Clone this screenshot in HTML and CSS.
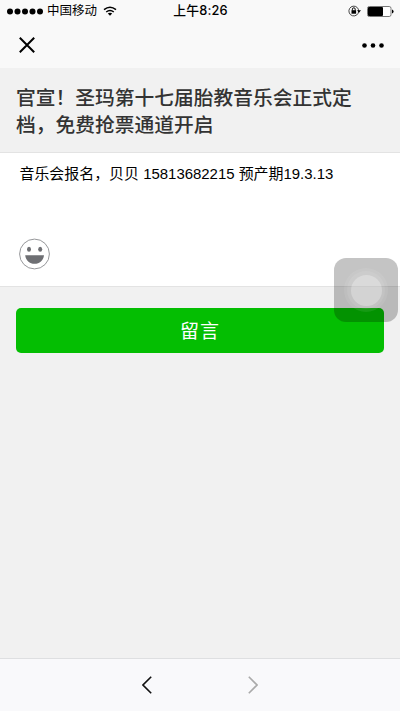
FILE: index.html
```html
<!DOCTYPE html>
<html lang="zh-CN">
<head>
<meta charset="utf-8">
<title>留言</title>
<link rel="stylesheet" href="styles.css">
</head>
<body>
<div class="screen">
  <header class="top">
    <div class="status">
      <div class="carrier">
        <svg class="signal" viewBox="0 0 36 7"><circle cx="3" cy="3.5" r="3"/><circle cx="10.5" cy="3.5" r="3"/><circle cx="18" cy="3.5" r="3"/><circle cx="25.5" cy="3.5" r="3"/><circle cx="33" cy="3.5" r="3"/></svg>
        <span>中国移动</span>
        <svg class="wifi" viewBox="0 0 14 10"><path d="M1 3.6Q7-1.3 13 3.6M3.2 6Q7 2.9 10.8 6" fill="none" stroke="#000" stroke-width="1.5"/><path d="M4.8 7.6Q7 6 9.2 7.6L7 9.7z"/></svg>
      </div>
      <span class="time">上午8:26</span>
      <div class="indicators">
        <svg class="lock" viewBox="0 0 13 12"><path d="M10.7 6A4.9 4.9 0 1 1 9.2 2.5Q10.7 4 10.7 6" fill="none" stroke="#333" stroke-width=".9"/><path d="M9 5.2h4l-2 2.5z"/><rect x="3.5" y="5.2" width="4.6" height="3.5"/><path d="M4.4 5.4V4.2a1.4 1.4 0 0 1 2.8 0v1.2" fill="none" stroke="#000"/></svg>
        <svg class="battery" viewBox="0 0 27 11"><rect x=".5" y=".5" width="23.5" height="10" rx="1.8" fill="#fff" stroke="#777"/><rect x="1" y="1" width="15" height="9" rx="1"/><path d="M25 3.5q1.6.3 1.6 2t-1.6 2z"/></svg>
      </div>
    </div>
    <nav class="navbar">
      <svg class="close" viewBox="0 0 16 16"><path d="M.8.8l14.4 14.4M15.2.8L.8 15.2"/></svg>
      <svg class="more" viewBox="0 0 22 5"><circle cx="2.5" cy="2.5" r="2.3"/><circle cx="11" cy="2.5" r="2.3"/><circle cx="19.5" cy="2.5" r="2.3"/></svg>
    </nav>
  </header>
  <main class="content">
    <h1 class="title">官宣！圣玛第十七届胎教音乐会正式定档，免费抢票通道开启</h1>
    <section class="comment">
      <p class="text">音乐会报名，贝贝 15813682215 预产期19.3.13</p>
      <svg class="emoji" viewBox="0 0 32 32"><circle cx="16.5" cy="16" r="14.9" fill="#fff" stroke="#96979a" stroke-width="1"/><ellipse cx="11" cy="11.2" rx="2" ry="2.5"/><ellipse cx="22.2" cy="11.2" rx="2" ry="2.5"/><path d="M7.2 17.2H26c-.6 5.4-4.4 8.6-9.4 8.6s-8.8-3.2-9.4-8.6z"/></svg>
    </section>
    <button class="submit">留言</button>
  </main>
  <footer class="toolbar">
    <svg class="arrow" viewBox="0 0 10 18"><path d="M9.2.8L1 9l8.2 8.2"/></svg>
    <svg class="arrow next" viewBox="0 0 10 18"><path d="M.8.8L9 9 .8 17.2"/></svg>
  </footer>
  <div class="assist"><div class="ring"><div class="ring inner"><div class="dot"></div></div></div></div>
</div>
</body>
</html>
```
FILE: styles.css
```css
* { box-sizing: border-box; }
body {
  margin: 0;
  font-family: "Liberation Sans", "Noto Sans CJK SC", sans-serif;
  color: #000;
}
svg { display: block; flex: none; }
.screen {
  position: relative;
  height: 711px;
  display: flex;
  flex-direction: column;
  background: #f1f1f1;
  overflow: hidden;
}
.top { height: 68px; background: #f9f9f9; }
.status {
  height: 22px;
  display: grid;
  grid-template-columns: 1fr auto 1fr;
  align-items: center;
  padding: 0 6px 0 7px;
  font-size: 12.5px;
  line-height: 22px;
}
.carrier { display: flex; align-items: center; }
.signal { width: 36px; height: 7px; margin-right: 4px; }
.wifi { width: 14px; height: 10px; margin-left: 6px; }
.time {
  font-family: Inter, "Noto Sans CJK SC", sans-serif;
  font-size: 12.8px;
  font-weight: 500;
  letter-spacing: .2px;
}
.indicators { display: flex; justify-content: flex-end; align-items: center; gap: 6px; }
.lock { width: 13px; height: 12px; }
.battery { width: 27px; height: 11px; }
.navbar {
  height: 46px;
  display: flex;
  align-items: center;
  justify-content: space-between;
  padding: 0 16px 0 19px;
}
.close { width: 16px; height: 16px; fill: none; stroke: #000; stroke-width: 2; }
.more { width: 22px; height: 5px; }
.content { flex: 1; }
.title {
  margin: 0;
  height: 84px;
  padding: 15px 16px 0;
  font-size: 19.76px;
  font-weight: 500;
  line-height: 27px;
  color: #333;
  font-family: "Noto Sans CJK SC", sans-serif;
}
.comment {
  height: 135px;
  padding: 10px 18px 0;
  background: #fff;
  border-top: 1px solid #e3e3e3;
  border-bottom: 1px solid #e3e3e3;
}
.text { margin: 0 0 53px 1.5px; font-size: 14.95px; line-height: 22px; white-space: nowrap; }
.emoji { width: 32px; height: 32px; fill: #6e6f73; }
.submit {
  display: block;
  width: 368px;
  height: 45px;
  margin: 21px 16px 0;
  padding: 0 0 2px;
  border: 0;
  border-radius: 5px;
  background: #04be02;
  color: #fff;
  font: 19px/43px "Noto Sans CJK SC", sans-serif;
  letter-spacing: 1px;
}
.toolbar {
  height: 53px;
  display: flex;
  justify-content: center;
  align-items: center;
  gap: 96px;
  background: #f9f9fb;
  border-top: 1px solid #dedfe1;
}
.arrow { width: 10px; height: 18px; fill: none; stroke: #111; stroke-width: 1.6; }
.next { stroke: #aaa; }
.assist {
  position: absolute;
  left: 334px;
  top: 258px;
  width: 64px;
  height: 64px;
  border-radius: 12px;
  background: rgba(0, 0, 0, .23);
  display: grid;
  place-items: center;
}
.ring {
  width: 44px;
  height: 44px;
  border-radius: 50%;
  background: rgba(255, 255, 255, .08);
  display: grid;
  place-items: center;
}
.inner { width: 38px; height: 38px; }
.dot { width: 31px; height: 31px; border-radius: 50%; background: rgba(255, 255, 255, .28); }
```
